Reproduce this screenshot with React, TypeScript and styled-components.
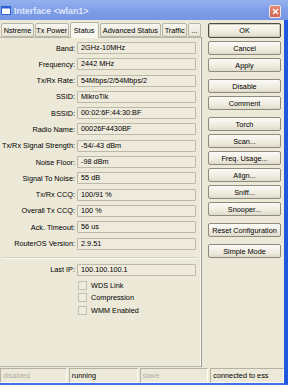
import styled, { createGlobalStyle } from 'styled-components';

const GlobalStyle = createGlobalStyle`
  html, body {
    margin: 0;
    padding: 0;
    background: #ece9d8;
  }
  body {
    font-family: "Liberation Sans", Arial, sans-serif;
    font-size: 7.3px;
    color: #000;
  }
`;

const Window = styled.div`
  width: 288px;
  height: 385px;
  display: flex;
  flex-direction: column;
  background: #ece9d8;
  overflow: hidden;
`;

const TitleBar = styled.div`
  height: 20px;
  flex: none;
  display: flex;
  align-items: center;
  padding: 0 7px 0 1px;
  background: linear-gradient(#94b0ee, #7d9ce8 60%, #7696e4);
`;

const Title = styled.span`
  flex: 1;
  margin-left: 3px;
  margin-top: 2px;
  font-weight: bold;
  font-size: 8.9px;
  color: #dfe7fb;
`;

const CloseButton = styled.div`
  width: 10px;
  height: 11px;
  margin-top: 3px;
  border: 1px solid #f3e3e0;
  border-radius: 2px;
  background: linear-gradient(#e38a78, #cf6550);
  display: flex;
  align-items: center;
  justify-content: center;
`;

const Frame = styled.div`
  flex: 1;
  display: flex;
  flex-direction: column;
  border-right: 4px solid #1f57de;
  border-bottom: 2px solid #3f72e6;
  min-height: 0;
`;

const Main = styled.div`
  flex: 1;
  display: flex;
  min-height: 0;
`;

const LeftPane = styled.div`
  width: 202px;
  display: flex;
  flex-direction: column;
`;

const TabRow = styled.div`
  height: 17px;
  display: flex;
  align-items: flex-end;
  padding-left: 1px;
`;

const Tab = styled.div<{ $w: number; $active?: boolean }>`
  width: ${(p) => p.$w}px;
  height: ${(p) => (p.$active ? 16 : 14)}px;
  margin-right: 1px;
  margin-bottom: ${(p) => (p.$active ? -1 : 0)}px;
  box-sizing: border-box;
  border: 1px solid #b8b6a8;
  border-bottom: ${(p) => (p.$active ? 'none' : '1px solid #b8b6a8')};
  border-radius: 2px 2px 0 0;
  background: ${(p) =>
    p.$active ? '#f6f5ee' : 'linear-gradient(#f7f6f0, #e6e3d3)'};
  display: flex;
  align-items: center;
  justify-content: center;
  padding-top: ${(p) => (p.$active ? 0 : 1)}px;
  white-space: nowrap;
  overflow: hidden;
  position: relative;
  z-index: ${(p) => (p.$active ? 1 : 0)};
`;

const Panel = styled.div`
  flex: 1;
  border: 1px solid #b8b6a8;
  border-left: none;
  border-right: 1px solid #9d9a8d;
  box-shadow: inset -1px 0 0 #fbfaf4;
  padding-top: 4px;
  display: flex;
  flex-direction: column;
`;

const FieldGrid = styled.div`
  display: grid;
  grid-template-columns: 77px 119px;
  row-gap: 4.3px;
  align-items: center;
`;

const Label = styled.div`
  text-align: right;
  padding-right: 2px;
  white-space: nowrap;
`;

const Field = styled.div`
  height: 12px;
  box-sizing: border-box;
  border: 1px solid #bdb9a9;
  border-radius: 1px;
  background: #eeebdc;
  padding-left: 3px;
  line-height: 10px;
  white-space: nowrap;
  overflow: hidden;
`;

const Separator = styled.div`
  margin: 7px 4px 5px 2px;
  height: 1px;
  background: #d4d0c0;
  border-bottom: 1px solid #f8f7f1;
`;

const CheckList = styled.div`
  display: flex;
  flex-direction: column;
  gap: 3.5px;
  padding: 5px 0 0 78px;
`;

const CheckRow = styled.div`
  display: flex;
  align-items: center;
  gap: 4px;
  height: 9px;
`;

const CheckBox = styled.div`
  width: 9px;
  height: 9px;
  box-sizing: border-box;
  border: 1px solid #c4c1b2;
  background: #efede2;
`;

const RightPane = styled.div`
  flex: 1;
  display: flex;
  flex-direction: column;
  padding: 3px 3px 0 6px;
`;

const Group = styled.div`
  display: flex;
  flex-direction: column;
  gap: 3px;
  margin-bottom: 7px;
`;

const Button = styled.div<{ $default?: boolean }>`
  height: ${(p) => (p.$default ? 15 : 14)}px;
  box-sizing: border-box;
  border: 1px solid ${(p) => (p.$default ? '#4f4d45' : '#8e8b7c')};
  border-radius: 2px;
  background: linear-gradient(#fbfaf6, #ece9dc 70%, #dedacb);
  box-shadow: inset 0 0 0 1px ${(p) => (p.$default ? '#cfcbbb' : 'transparent')};
  display: flex;
  align-items: center;
  justify-content: center;
  white-space: nowrap;
`;

const StatusBar = styled.div`
  height: 16px;
  flex: none;
  display: flex;
  gap: 2px;
  padding-top: 1px;
  box-sizing: border-box;
`;

const StatusCell = styled.div<{ $w: number; $dim?: boolean }>`
  width: ${(p) => p.$w}px;
  box-sizing: border-box;
  border: 1px solid;
  border-color: #b4b1a2 #fbfaf4 #fbfaf4 #b4b1a2;
  padding-left: 2px;
  line-height: 13px;
  color: ${(p) => (p.$dim ? '#b3b0a2' : '#000')};
  white-space: nowrap;
  overflow: hidden;
`;

const fields: [string, string][] = [
  ['Band:', '2GHz-10MHz'],
  ['Frequency:', '2442 MHz'],
  ['Tx/Rx Rate:', '54Mbps/2/54Mbps/2'],
  ['SSID:', 'MikroTik'],
  ['BSSID:', '00:02:6F:44:30:BF'],
  ['Radio Name:', '00026F4430BF'],
  ['Tx/Rx Signal Strength:', '-54/-43 dBm'],
  ['Noise Floor:', '-98 dBm'],
  ['Signal To Noise:', '55 dB'],
  ['Tx/Rx CCQ:', '100/91 %'],
  ['Overall Tx CCQ:', '100 %'],
  ['Ack. Timeout:', '56 us'],
  ['RouterOS Version:', '2.9.51'],
];

const tabs: [string, number][] = [
  ['Nstreme', 33],
  ['Tx Power', 34],
  ['Status', 29],
  ['Advanced Status', 62],
  ['Traffic', 25],
  ['...', 13],
];

const buttonGroups: string[][] = [
  ['OK', 'Cancel', 'Apply'],
  ['Disable', 'Comment'],
  ['Torch', 'Scan...', 'Freq. Usage...', 'Align...', 'Sniff...', 'Snooper...'],
  ['Reset Configuration'],
  ['Simple Mode'],
];

const App = () => {
  return (
    <>
      <GlobalStyle />
      <Window>
        <TitleBar>
          <svg width="10" height="9" viewBox="0 0 10 9">
            <rect x="0.5" y="0.5" width="9" height="8" fill="#fff" stroke="#2d5fd8" />
            <rect x="0.5" y="0.5" width="9" height="2" fill="#2d5fd8" />
          </svg>
          <Title>Interface &lt;wlan1&gt;</Title>
          <CloseButton>
            <svg width="7" height="7" viewBox="0 0 7 7">
              <path d="M1 1 L6 6 M6 1 L1 6" stroke="#fff" strokeWidth="1.4" />
            </svg>
          </CloseButton>
        </TitleBar>
        <Frame>
          <Main>
            <LeftPane>
              <TabRow>
                {tabs.map(([name, w]) => (
                  <Tab key={name} $w={w} $active={name === 'Status'}>
                    {name}
                  </Tab>
                ))}
              </TabRow>
              <Panel>
                <FieldGrid>
                  {fields.map(([label, value]) => (
                    <>
                      <Label key={label + 'l'}>{label}</Label>
                      <Field key={label + 'v'}>{value}</Field>
                    </>
                  ))}
                </FieldGrid>
                <Separator />
                <FieldGrid>
                  <Label>Last IP:</Label>
                  <Field>100.100.100.1</Field>
                </FieldGrid>
                <CheckList>
                  {['WDS Link', 'Compression', 'WMM Enabled'].map((c) => (
                    <CheckRow key={c}>
                      <CheckBox />
                      <span>{c}</span>
                    </CheckRow>
                  ))}
                </CheckList>
              </Panel>
            </LeftPane>
            <RightPane>
              {buttonGroups.map((group, i) => (
                <Group key={i}>
                  {group.map((b) => (
                    <Button key={b} $default={b === 'OK'}>
                      {b}
                    </Button>
                  ))}
                </Group>
              ))}
            </RightPane>
          </Main>
          <StatusBar>
            <StatusCell $w={67} $dim>disabled</StatusCell>
            <StatusCell $w={69}>running</StatusCell>
            <StatusCell $w={69} $dim>slave</StatusCell>
            <StatusCell $w={74}>connected to ess</StatusCell>
          </StatusBar>
        </Frame>
      </Window>
    </>
  );
};

export default App;
